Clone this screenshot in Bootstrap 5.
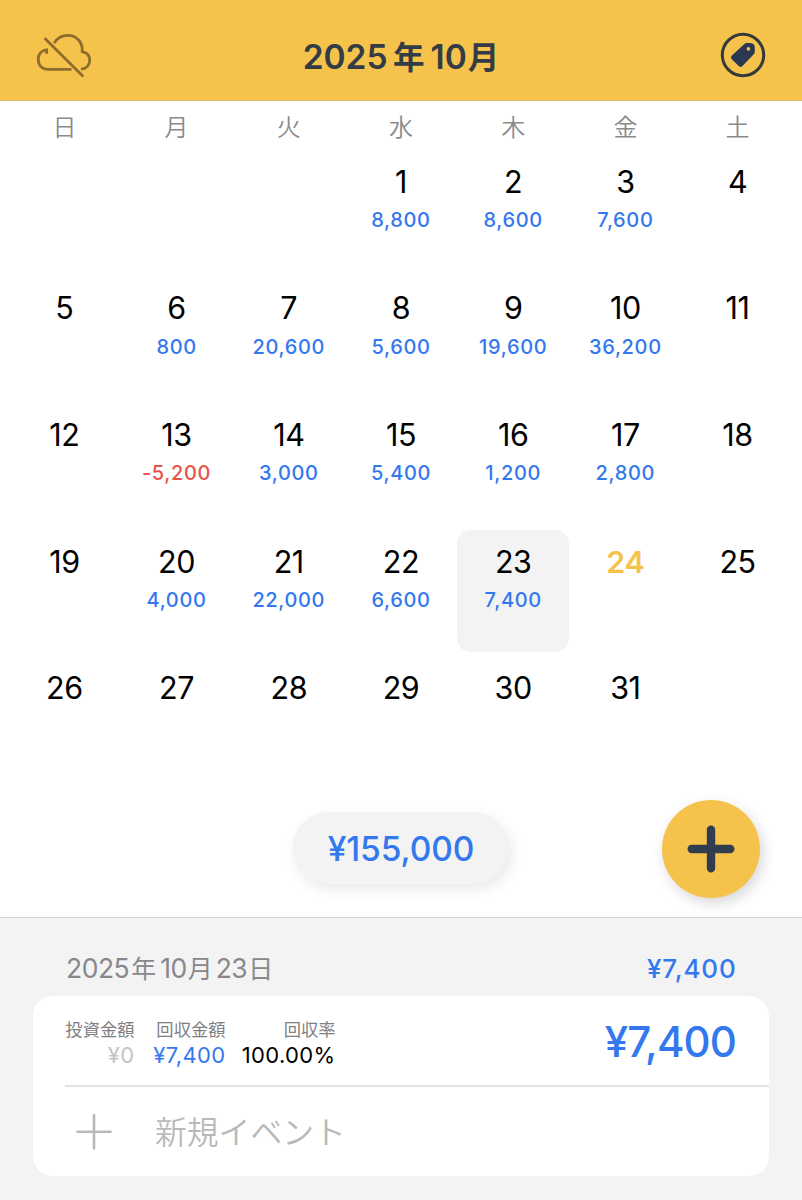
<!DOCTYPE html>
<html lang="ja">
<head>
<meta charset="utf-8">
<meta name="viewport" content="width=device-width, initial-scale=1">
<title>2025年10月</title>
<link href="https://cdn.jsdelivr.net/npm/bootstrap@5.3.0/dist/css/bootstrap.min.css" rel="stylesheet">
<style>
  :root { --amber: #f5c24c; --navy: #2f3d4e; --blue: #3478ee; --mist: #f3f3f3; }
  body { font-family: Inter, "Noto Sans CJK JP", sans-serif; color: #000; background: #fff; width: 802px; height: 1200px; overflow: hidden; }
  .kanji { font-family: "Noto Sans CJK JP", sans-serif; }
  .blue { color: var(--blue); }
  .topbar { height: 101px; background: var(--amber); border-bottom: 1px solid #dcbd72; padding: 9px 36px 0; }
  .cloud { margin-top: 5px; }
  .month-title { font-size: 33.5px; font-weight: 600; line-height: 40px; color: #333c44; margin: 2px 10px 0 0; }
  .month-title .kanji { font-size: 31.5px; font-weight: 700; }
  .month-title .year { margin: 0 6px 0 5.5px; }
  .month-title .mon { margin-left: 1px; }
  .month-grid { display: grid; grid-template-columns: repeat(7, 1fr); padding: 0 8.3px; }
  .weekdays { height: 49px; line-height: 49px; font-size: 24px; color: #8a8a8d; text-align: center; font-weight: 350; }
  .days { grid-auto-rows: 126.7px; height: 650px; }
  .day { height: 122px; margin-top: .3px; border-radius: 14px; padding-top: 13.4px; text-align: center; }
  .day b { display: block; font-weight: 400; font-size: 30.5px; line-height: 36px; letter-spacing: -.4px; }
  .day span { display: block; font-weight: 500; font-size: 20px; line-height: 24px; margin-top: 8.4px; letter-spacing: .65px; color: var(--blue); }
  .day .loss { color: #e5544b; }
  .day.selected { background: var(--mist); }
  .day.today b { color: var(--amber); font-weight: 600; letter-spacing: -.2px; }
  .actions { height: 117px; padding: 0 42px 0 293px; }
  .total { width: 216px; height: 72px; margin-top: 12px; padding-top: 2px; background: var(--mist); font-size: 33.5px; font-weight: 550; letter-spacing: -.1px; box-shadow: 3px 5px 14px rgba(0,0,0,.09); }
  .add-button { width: 98px; height: 98px; background: var(--amber); box-shadow: 3px 5px 14px rgba(0,0,0,.16); }
  .detail { height: 283px; background: var(--mist); border-top: 1px solid #d3d3d4; padding: 29px 33px 0; }
  .detail-head { height: 44px; line-height: 44px; padding: 0 33px; }
  .detail-date { color: #88888c; font-size: 26.5px; letter-spacing: -.5px; line-height: 41px; }
  .detail-date .kanji { font-size: 25px; }
  .detail-date .year { margin: 0 4.5px 0 2px; }
  .detail-date .mon { margin: 0 3.5px 0 1px; }
  .detail-date .dom { margin-left: 1px; }
  .detail-sum { font-size: 26px; font-weight: 550; letter-spacing: .85px; margin-right: -.6px; }
  .record-card { height: 180px; margin-top: 5px; background: #fff; border-radius: 20px; padding-left: 32px; }
  .record { height: 91px; padding: 20px 33px 0 0; border-bottom: 2px solid #e3e3e4; }
  .metric { text-align: right; font-size: 22px; line-height: 27px; letter-spacing: .35px; white-space: nowrap; }
  .m-zero { width: 69.5px; }
  .m-back { width: 91px; }
  .m-rate { width: 110px; }
  .m-zero .m-val { color: #c4c4c6; }
  .caption-jp { font-size: 17.3px; line-height: 26px; color: #808084; letter-spacing: 0; }
  .record-sum { font-size: 42px; line-height: 52px; font-weight: 550; letter-spacing: -.9px; }
  .new-event { height: 88px; color: #b9b9ba; font-size: 31.8px; font-weight: 350; }
  .event-label { margin-left: 42px; }
</style>
</head>
<body>
<header class="topbar d-flex align-items-center justify-content-between">
  <svg class="cloud" width="56" height="48" viewBox="0 -2 56 48" fill="none" stroke="#8d6d2c" stroke-width="2.8" stroke-linecap="butt" aria-label="offline">
    <path d="M10.6 18.8V14.8C4.8 15.5 2.2 20 2.2 24.500C2.2 30.5 6.5 34.3 12 34.3H35.5"/>
    <path d="M18.2 7.7C21.5 2.2 26.5 0 32 0C40.5 0 47 7 46.2 16.2C51 17.2 53.7 20.7 53.7 25C53.7 30 50 33.7 45 33.8" transform="translate(0 .4)"/>
    <path d="M9.4 4L46.5 40.8" stroke-linecap="round"/>
  </svg>
  <div class="month-title">2025<span class="kanji year">年</span>10<span class="kanji mon">月</span></div>
  <svg width="46" height="46" viewBox="0 0 46 46" aria-label="tags">
    <circle cx="23" cy="23" r="20.7" fill="none" stroke="#343a3a" stroke-width="3"/>
    <path fill="#2c3750" fill-rule="evenodd" d="M23.800 12.400Q25.300 11 27.200 11H30.500Q34.700 11.400 34.800 15.500V19.500Q34.800 21.300 33.500 22.600L22.200 34.200Q20.600 35.600 19 34.200L11.600 27Q10 25.300 11.700 23.700ZM28.400 15.100A1.800 1.800 0 1 0 28.400 18.700A1.800 1.800 0 1 0 28.400 15.100Z"/>
  </svg>
</header>

<main>
  <div class="month-grid weekdays kanji">
    <div>日</div><div>月</div><div>火</div><div>水</div><div>木</div><div>金</div><div>土</div>
  </div>
  <div class="month-grid days">
    <div></div><div></div><div></div>
    <div class="day"><b>1</b><span>8,800</span></div>
    <div class="day"><b>2</b><span>8,600</span></div>
    <div class="day"><b>3</b><span>7,600</span></div>
    <div class="day"><b>4</b></div>
    <div class="day"><b>5</b></div>
    <div class="day"><b>6</b><span>800</span></div>
    <div class="day"><b>7</b><span>20,600</span></div>
    <div class="day"><b>8</b><span>5,600</span></div>
    <div class="day"><b>9</b><span>19,600</span></div>
    <div class="day"><b>10</b><span>36,200</span></div>
    <div class="day"><b>11</b></div>
    <div class="day"><b>12</b></div>
    <div class="day"><b>13</b><span class="loss">-5,200</span></div>
    <div class="day"><b>14</b><span>3,000</span></div>
    <div class="day"><b>15</b><span>5,400</span></div>
    <div class="day"><b>16</b><span>1,200</span></div>
    <div class="day"><b>17</b><span>2,800</span></div>
    <div class="day"><b>18</b></div>
    <div class="day"><b>19</b></div>
    <div class="day"><b>20</b><span>4,000</span></div>
    <div class="day"><b>21</b><span>22,000</span></div>
    <div class="day"><b>22</b><span>6,600</span></div>
    <div class="day selected"><b>23</b><span>7,400</span></div>
    <div class="day today"><b>24</b></div>
    <div class="day"><b>25</b></div>
    <div class="day"><b>26</b></div>
    <div class="day"><b>27</b></div>
    <div class="day"><b>28</b></div>
    <div class="day"><b>29</b></div>
    <div class="day"><b>30</b></div>
    <div class="day"><b>31</b></div>
  </div>
  <div class="actions d-flex align-items-start justify-content-between">
    <div class="total blue rounded-pill d-flex align-items-center justify-content-center">¥155,000</div>
    <button class="add-button border-0 rounded-circle p-0 d-flex align-items-center justify-content-center" type="button" aria-label="add">
      <svg width="48" height="48" viewBox="0 0 48 48" stroke="#2f3d4e" stroke-width="8.4" stroke-linecap="round"><path d="M24 4.7V43.3M4.7 24H43.3"/></svg>
    </button>
  </div>
</main>

<section class="detail">
  <div class="detail-head d-flex justify-content-between">
    <div class="detail-date">2025<span class="kanji year">年</span>10<span class="kanji mon">月</span>23<span class="kanji dom">日</span></div>
    <div class="detail-sum blue">¥7,400</div>
  </div>
  <div class="record-card">
    <div class="record d-flex">
      <div class="metric m-zero"><div class="caption-jp kanji">投資金額</div><div class="m-val">¥0</div></div>
      <div class="metric m-back"><div class="caption-jp kanji">回収金額</div><div class="m-val blue">¥7,400</div></div>
      <div class="metric m-rate"><div class="caption-jp kanji">回収率</div><div class="m-val">100.00%</div></div>
      <div class="record-sum blue ms-auto">¥7,400</div>
    </div>
    <div class="new-event d-flex align-items-center kanji">
      <svg class="ms-2" width="40" height="40" viewBox="0 0 40 40" stroke="#b9b9ba" stroke-width="2.6" stroke-linecap="round"><path d="M21 4V37.5M4.5 20.7H37.5"/></svg>
      <span class="event-label">新規イベント</span>
    </div>
  </div>
</section>
<script src="https://cdn.jsdelivr.net/npm/bootstrap@5.3.0/dist/js/bootstrap.bundle.min.js"></script>
</body>
</html>
